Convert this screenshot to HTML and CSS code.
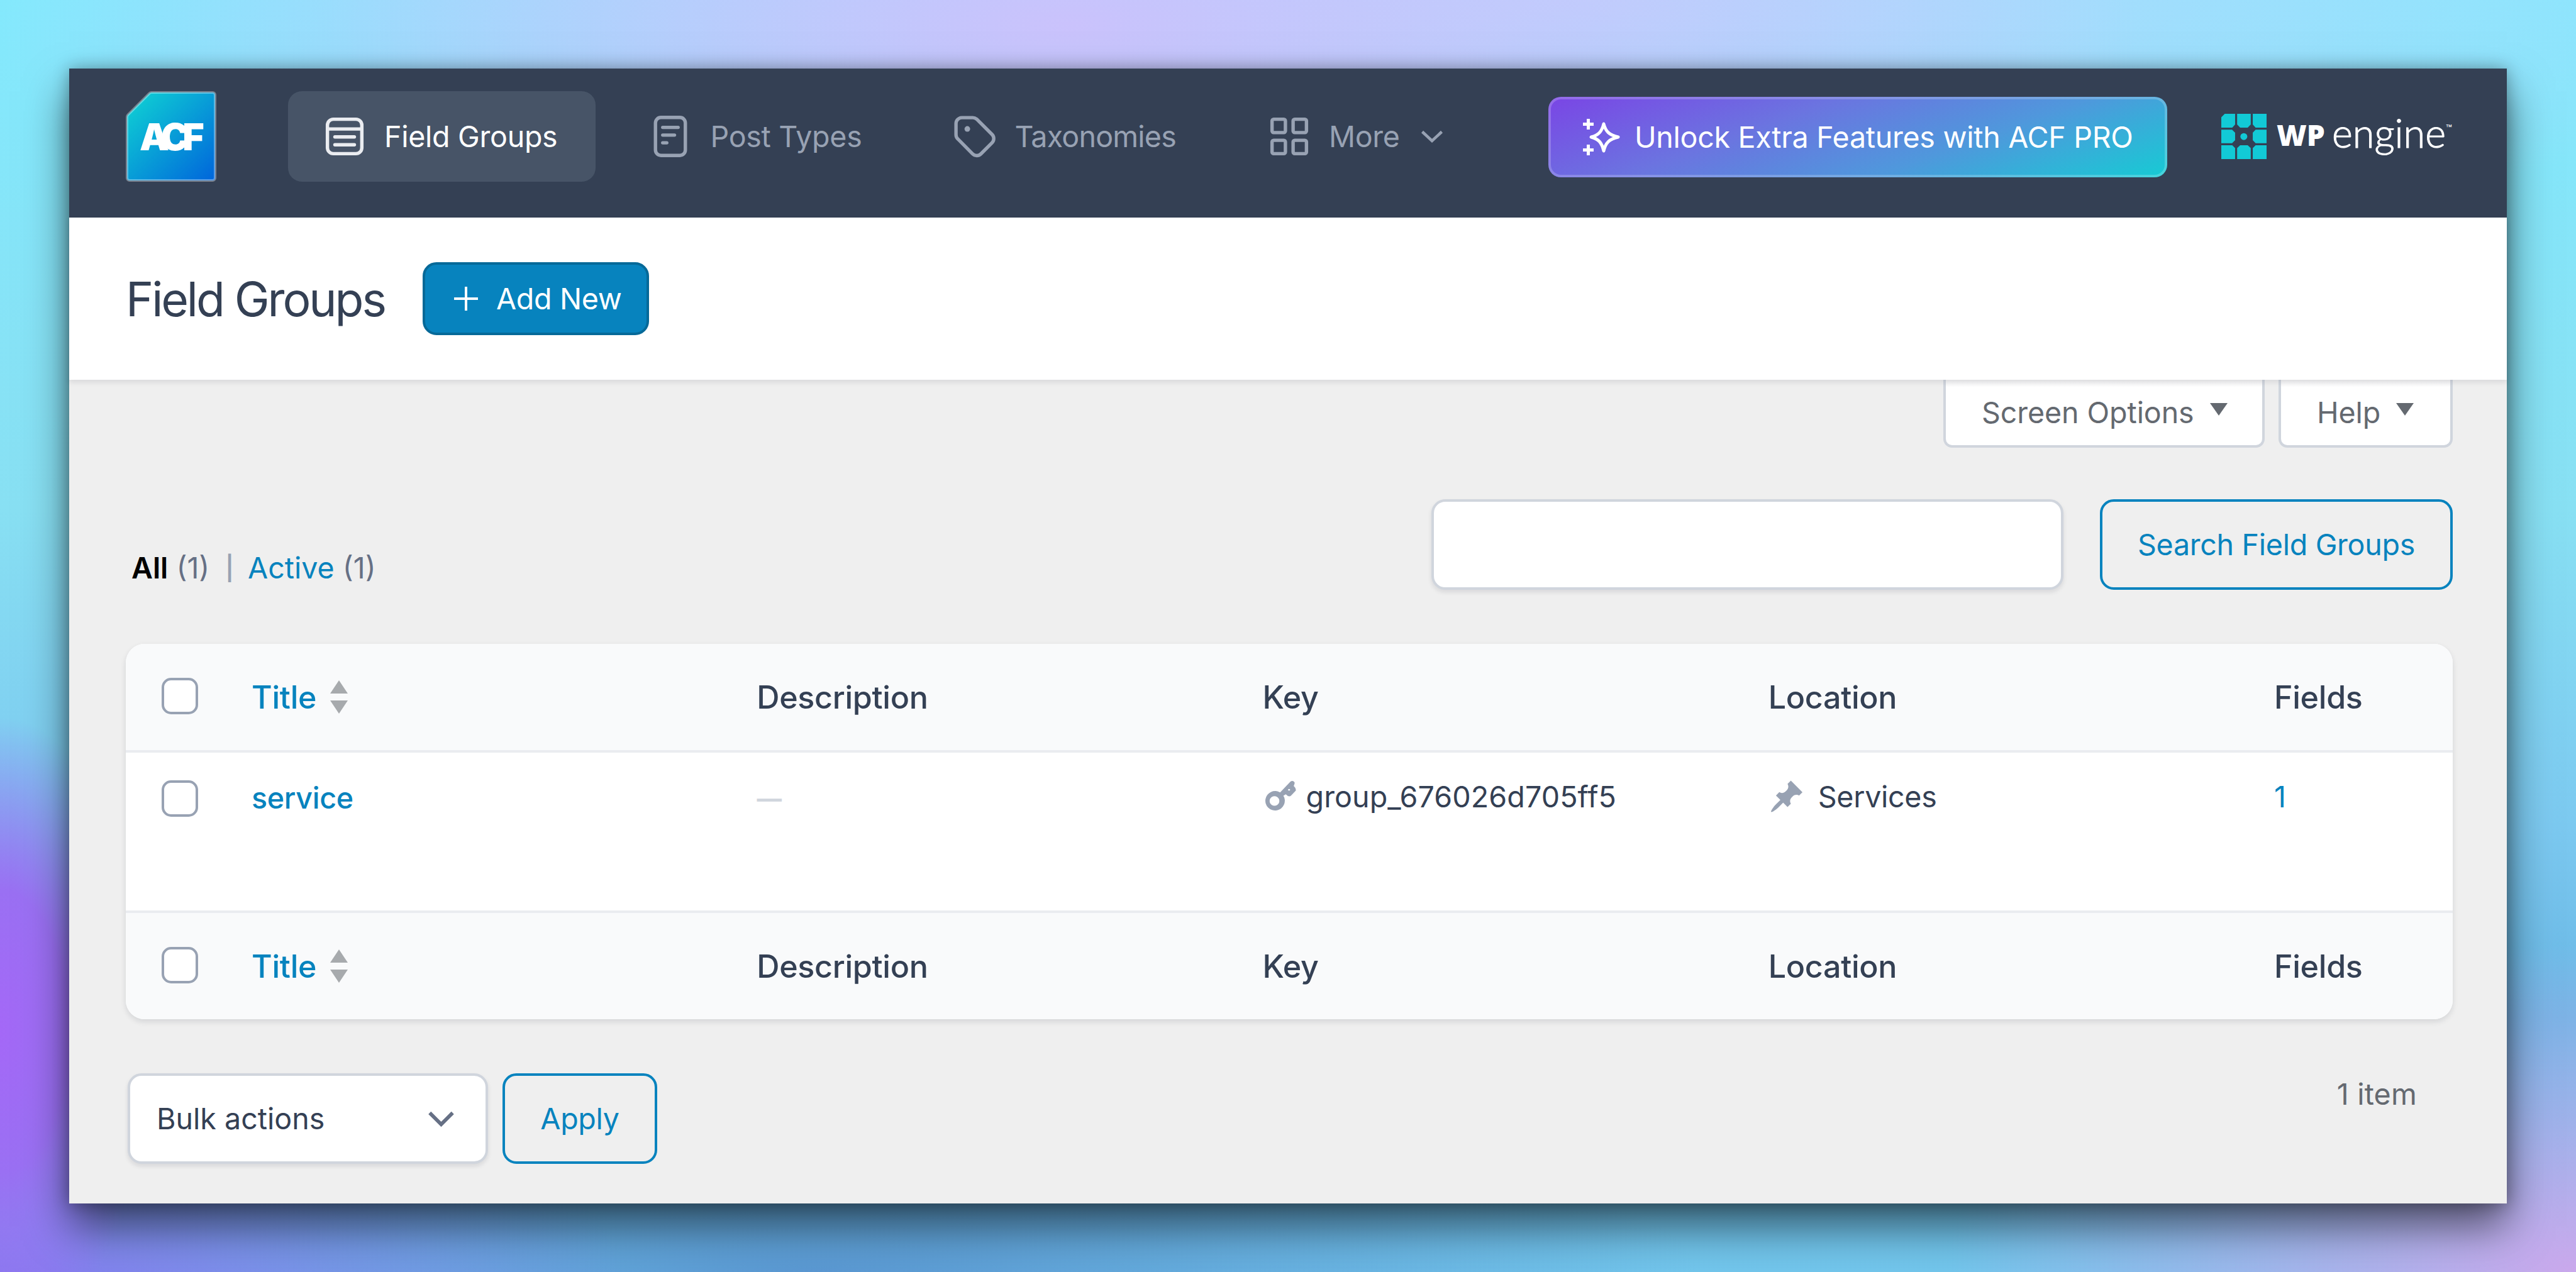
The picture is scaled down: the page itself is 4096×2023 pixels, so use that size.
FILE: index.html
```html
<!DOCTYPE html>
<html lang="en">
<head>
  <meta charset="UTF-8">
  <title>Field Groups</title>
  <link rel="stylesheet" href="styles.css">
</head>
<body>
  <div class="window">

    <nav class="navbar">
      <a class="logo" href="#">
        <svg viewBox="0 0 144 144">
          <defs>
            <linearGradient id="acf" x1="0" y1="0" x2="1" y2="1">
              <stop offset="0.1" stop-color="#0ecad4"/>
              <stop offset="1" stop-color="#0065db"/>
            </linearGradient>
          </defs>
          <path d="M41 2H138a4 4 0 0 1 4 4V138a4 4 0 0 1-4 4H6a4 4 0 0 1-4-4V41a5 5 0 0 1 1.5-3.5L37.500 3.500A5 5 0 0 1 41 2z" fill="url(#acf)" stroke="#fff" stroke-opacity=".35" stroke-width="4"/>
        </svg>
        <span class="logo-text">ACF</span>
      </a>

      <div class="tabs">
        <a class="tab active" href="#">
          <svg class="icon" viewBox="0 0 20 20"><rect x="2.400" y="2.400" width="15.200" height="15.200" rx="2.600"/><path d="M2.400 6.700h15.200M5.700 10.200h8.600M5.700 13.700h8.600"/></svg>
          <span>Field Groups</span>
        </a>
        <a class="tab" href="#">
          <svg class="icon" viewBox="0 0 20 20"><rect x="3.400" y="1.600" width="13.200" height="16.800" rx="2.400"/><path d="M6.600 6h6.800M6.600 9.400h5.200M6.600 12.800h1.800"/></svg>
          <span>Post Types</span>
        </a>
        <a class="tab taxonomies" href="#">
          <svg class="icon" viewBox="0 0 20 20"><path d="M1.700 4.300a2.600 2.600 0 0 1 2.600-2.600h4.800c.7 0 1.300.3 1.800.7l6.700 6.700a2.600 2.600 0 0 1 0 3.700l-4.900 4.900a2.600 2.600 0 0 1-3.700 0L2.400 11a2.600 2.600 0 0 1-.7-1.800z"/><circle class="dot" cx="6.700" cy="6.700" r="1.250"/></svg>
          <span>Taxonomies</span>
        </a>
        <a class="tab" href="#">
          <svg class="icon" viewBox="0 0 20 20"><rect x="2.400" y="2.400" width="5.900" height="5.900" rx=".7"/><rect x="11.700" y="2.400" width="5.900" height="5.900" rx=".7"/><rect x="2.400" y="11.700" width="5.900" height="5.900" rx=".7"/><rect x="11.700" y="11.700" width="5.900" height="5.900" rx=".7"/></svg>
          <span>More</span>
          <svg class="caret" viewBox="0 0 36 20"><path d="M2.500 2.500L18 17 33.500 2.500"/></svg>
        </a>
      </div>

      <a class="btn-pro" href="#">
        <svg viewBox="0 0 60 60"><path d="M34 9c3 12 9 18 23 21-14 3-20 9-23 22-3-13-8-19-20-22 12-3 17-9 20-21z"/><path d="M9.500 1v17M1 9.500h17M9.500 42v17M1 50.500h17"/></svg>
        <span>Unlock Extra Features with ACF PRO</span>
      </a>

      <a class="wpengine" href="#">
        <svg viewBox="0 0 223 223">
          <path d="M17 0H68V53L54 68H0V17zM78 0H145V53L130 68H93L78 53zM155 0H223V68H169L155 53zM0 78H53L68 93V130L53 145H0zM223 78H169L155 93V130L169 145H223zM0 155H54L68 169V223H0zM93 155H130L145 169V223H78V169zM169 155H223V223H155V169z"/>
          <circle cx="111" cy="112" r="17"/>
        </svg>
        <span class="wp">WP</span><span class="engine">engine</span><span class="tm">™</span>
      </a>
    </nav>

    <header class="page-header">
      <h1>Field Groups</h1>
      <a class="btn-add" href="#">
        <svg viewBox="0 0 40 40"><path d="M20 1v38M1 20h38"/></svg>
        <span>Add New</span>
      </a>
    </header>

    <main class="content">
      <div class="screen-meta">
        <button class="meta-btn options"><span>Screen Options</span><i class="down"></i></button>
        <button class="meta-btn help"><span>Help</span><i class="down"></i></button>
      </div>

      <div class="filters">
        <ul class="views">
          <li><b>All</b> <span class="count">(1)</span></li>
          <li class="sep">|</li>
          <li><a href="#">Active</a> <span class="count">(1)</span></li>
        </ul>
        <div class="search">
          <input class="search-input" type="text">
          <button class="btn search-btn"><span>Search Field Groups</span></button>
        </div>
      </div>

      <div class="table-wrap">
        <table>
          <thead>
            <tr>
              <th class="check"><span class="box"></span></th>
              <th><a class="sort" href="#"><span>Title</span><i class="arrows"></i></a></th>
              <th>Description</th>
              <th>Key</th>
              <th>Location</th>
              <th class="fields">Fields</th>
            </tr>
          </thead>
          <tbody>
            <tr>
              <td class="check"><span class="box"></span></td>
              <td><a class="row-title" href="#">service</a></td>
              <td><span class="dash">—</span></td>
              <td>
                <div class="with-icon">
                  <svg class="key" viewBox="0 0 155 152"><path d="M76 60L127 6Q139-2 147 10Q149 15 143 28Q156 40 153 51L130 75Q120 86 104 69L92 76A48 48 0 1 1 76 60zM48 78a24 24 0 1 0 .1 0zM120 43a5 4 0 1 0 .1 0z"/></svg>
                  <span class="group-key">group_676026d705ff5</span>
                </div>
              </td>
              <td>
                <div class="with-icon">
                  <svg class="pin" viewBox="0 0 20 20"><path d="M10.440 3.020l1.820-1.820 6.360 6.350-1.830 1.820c-1.050-.68-2.480-.57-3.410.36l-.75.75c-.92.93-1.040 2.350-.35 3.410l-1.830 1.820-2.410-2.410-2.800 2.790c-.42.42-3.380 2.710-3.800 2.290s1.860-3.390 2.280-3.810l2.790-2.790L4.100 9.360l1.830-1.820c1.050.69 2.480.57 3.400-.36l.75-.75c.93-.92 1.050-2.350.36-3.410z"/></svg>
                  <span>Services</span>
                </div>
              </td>
              <td class="fields"><a href="#">1</a></td>
            </tr>
          </tbody>
          <tfoot>
            <tr>
              <th class="check"><span class="box"></span></th>
              <th><a class="sort" href="#"><span>Title</span><i class="arrows"></i></a></th>
              <th>Description</th>
              <th>Key</th>
              <th>Location</th>
              <th class="fields">Fields</th>
            </tr>
          </tfoot>
        </table>
      </div>

      <div class="bottom">
        <div class="select">
          <span>Bulk actions</span>
          <svg viewBox="0 0 44 26"><path d="M3 3l19 19L41 3"/></svg>
        </div>
        <button class="btn apply"><span>Apply</span></button>
        <span class="items">1 item</span>
      </div>
    </main>

  </div>
</body>
</html>
```
FILE: styles.css
```css
* {
  box-sizing: border-box;
}

body {
  margin: 0;
  width: 4096px;
  height: 2023px;
  padding: 109px 110px;
  overflow: hidden;
  font-family: Inter, sans-serif;
  font-size: 46.6px;
  letter-spacing: -0.300px;
  color: #344054;
  background:
    radial-gradient(ellipse 1700px 560px at 1700px 40px, #cac2fc 0%, rgba(201, 195, 252, 0) 100%),
    radial-gradient(ellipse 2000px 420px at 2500px 0, #b9d4fd 0%, rgba(188, 210, 253, 0) 100%),
    radial-gradient(ellipse 240px 500px at 0 1640px, #a468f7 0%, #9a70f3 45%, rgba(140, 130, 240, 0) 100%),
    radial-gradient(ellipse 1000px 420px at 0 2060px, #8676ee 0%, rgba(110, 130, 230, 0) 100%),
    radial-gradient(ellipse 1000px 520px at 4096px 2023px, #caa8ec 0%, rgba(160, 170, 232, 0) 100%),
    radial-gradient(ellipse 1400px 260px at 1300px 2023px, #5a98d2 0%, rgba(90, 160, 216, 0) 100%),
    linear-gradient(180deg, #84e9fd 0%, #88e0f3 40%, #7cc9f0 65%, #68b6e4 80%, #72c6ec 100%);
}

a {
  color: #0783be;
  text-decoration: none;
}

button {
  font: inherit;
  letter-spacing: inherit;
  padding: 0;
}

svg {
  display: block;
  fill: none;
  stroke: currentColor;
}

.window {
  height: 1805px;
  background: #efefef;
  box-shadow: 0 36px 64px rgba(0, 0, 0, 0.55), 0 0 24px rgba(0, 0, 0, 0.3);
}

/* top bar */
.navbar {
  display: flex;
  align-items: center;
  height: 237px;
  padding: 0 86px 22px 90px;
  background: #344054;
}

.logo {
  position: relative;
  width: 144px;
  height: 144px;
}

.logo-text {
  position: absolute;
  left: 22px;
  top: 37px;
  font-size: 59px;
  font-weight: 900;
  line-height: 72px;
  letter-spacing: -10px;
  color: #fff;
}

.tabs {
  display: flex;
  gap: 29px;
  margin-left: 114px;
}

.tab {
  display: flex;
  align-items: center;
  height: 144px;
  padding: 0 61px 0 54px;
  border-radius: 22px;
  color: #98a2b3;
}

.tab.active {
  background: #475467;
  color: #fff;
}

.tab.active .icon {
  color: #eaecf0;
}

.taxonomies {
  letter-spacing: -0.800px;
}

.icon {
  width: 72px;
  height: 72px;
  margin-right: 27px;
  stroke-width: 1.500;
  stroke-linecap: round;
  stroke-linejoin: round;
}

.icon .dot {
  fill: currentColor;
  stroke: none;
}

.caret {
  width: 36px;
  height: 20px;
  margin-left: 33px;
  stroke-width: 4.500;
}

.btn-pro {
  display: flex;
  align-items: center;
  width: 984px;
  height: 128px;
  margin: 2px 0 0 auto;
  padding-left: 50px;
  border: 4px solid rgba(255, 255, 255, 0.2);
  border-radius: 20px;
  background: linear-gradient(160deg, #7a45e5 0%, #6b74e0 35%, #4f98dc 65%, #16cbd4 100%) border-box;
  color: #fff;
}

.btn-pro svg {
  width: 60px;
  height: 60px;
  margin-right: 23px;
  stroke-width: 5;
  stroke-linejoin: round;
}

.wpengine {
  display: flex;
  align-items: center;
  width: 368px;
  margin-left: 86px;
  color: #fff;
  letter-spacing: 0;
  white-space: nowrap;
}

.wpengine svg {
  width: 72px;
  height: 72px;
  margin-right: 16px;
  fill: #12cad6;
  stroke: none;
}

.wp {
  margin-top: -5px;
  font-family: "Open Sans", sans-serif;
  font-size: 46px;
  font-weight: 800;
  line-height: 60px;
}

.engine {
  margin: -12px 0 0 11px;
  font-family: Lato, sans-serif;
  font-size: 63px;
  font-weight: 300;
  line-height: 60px;
  -webkit-text-stroke: 1px #fff;
}

.tm {
  font-size: 16px;
  margin-top: -26px;
}

/* page title */
.page-header {
  position: relative;
  display: flex;
  align-items: center;
  height: 258px;
  padding-left: 90px;
  background: #fff;
  box-shadow: 0 4px 8px rgba(16, 24, 40, 0.1);
}

h1 {
  margin: 0;
  font-size: 75px;
  font-weight: 400;
  letter-spacing: -3.100px;
}

.btn-add {
  display: flex;
  align-items: center;
  width: 360px;
  height: 116px;
  margin-left: 60px;
  padding-left: 45px;
  border: 4px solid #066998;
  border-radius: 22px;
  background: #0783be;
  color: #fff;
}

.btn-add svg {
  width: 40px;
  height: 40px;
  margin-right: 28px;
  stroke-width: 4;
}

.content {
  padding: 0 86px 0 90px;
}

.screen-meta {
  display: flex;
  justify-content: flex-end;
  gap: 22px;
}

.meta-btn {
  display: flex;
  align-items: center;
  height: 108px;
  padding: 0 0 0 57px;
  border: 4px solid #d0d5dd;
  border-top: none;
  border-radius: 0 0 14px 14px;
  background: linear-gradient(#f1f1f2, #fff 12px);
  color: #646970;
  letter-spacing: -0.100px;
}

.options {
  width: 511px;
}

.help {
  width: 277px;
}

.down {
  margin: -10px 0 0 25px;
  border: 14px solid transparent;
  border-top: 20px solid #646970;
  border-bottom: none;
}

/* views and search */
.filters {
  display: flex;
  justify-content: space-between;
  align-items: flex-end;
  margin-top: 82px;
}

.views {
  display: flex;
  margin: 0;
  padding: 0 0 0 9px;
  list-style: none;
  line-height: 70px;
  letter-spacing: 0;
}

.views b {
  font-weight: 600;
  color: #000;
}

.count {
  color: #667085;
}

.sep {
  margin: 0 22px 0 25px;
  font-size: 38px;
  font-weight: 600;
  color: #98a2b3;
}

.search {
  display: flex;
  gap: 58px;
}

.search-input {
  width: 1005px;
  height: 144px;
  border: 4px solid #d0d5dd;
  border-radius: 22px;
  background: #fff;
  box-shadow: 0 4px 7px rgba(16, 24, 40, 0.1);
}

.btn {
  height: 144px;
  border: 4px solid #0783be;
  border-radius: 22px;
  background: none;
  color: #0783be;
}

.search-btn {
  width: 561px;
}

/* list table */
.table-wrap {
  margin-top: 86px;
  border-radius: 30px;
  overflow: hidden;
  background: #fff;
  box-shadow: 0 4px 10px rgba(16, 24, 40, 0.12);
}

table {
  width: 100%;
  table-layout: fixed;
  border-spacing: 0;
}

th {
  height: 173px;
  padding: 0;
  text-align: left;
  font-size: 50.200px;
  font-weight: 540;
  background: #f9fafb;
}

thead th {
  border-bottom: 4px solid #eaecf0;
}

tfoot th {
  border-top: 4px solid #eaecf0;
}

td {
  height: 251px;
  padding: 34px 0 0;
  line-height: 72px;
  vertical-align: top;
}

.check {
  width: 199px;
  padding-left: 57px;
}

.fields {
  width: 284px;
}

.box {
  display: block;
  width: 58px;
  height: 58px;
  border: 4px solid #98a2b3;
  border-radius: 15px;
  background: #fff;
}

th .box {
  margin-top: -4px;
}

td .box {
  margin-top: 10px;
}

.sort {
  display: flex;
  align-items: center;
  padding-left: 1px;
}

.arrows {
  display: flex;
  flex-direction: column;
  gap: 11px;
  margin-left: 22px;
}

.arrows::before,
.arrows::after {
  content: "";
  border: 14.500px solid transparent;
}

.arrows::before {
  border-top: none;
  border-bottom: 21px solid #a7aaad;
}

.arrows::after {
  border-bottom: none;
  border-top: 21px solid #a7aaad;
}

.row-title {
  display: block;
  padding: 2px 0 0 1px;
  font-weight: 540;
}

.dash {
  padding-left: 1px;
  font-size: 38px;
  color: #d0d5dd;
  -webkit-text-stroke: 1.500px #d0d5dd;
}

.with-icon {
  display: flex;
  align-items: center;
}

.with-icon svg {
  fill: #98a2b3;
  stroke: none;
}

.key {
  width: 50px;
  height: 49px;
  margin: -4px 16px 0 3px;
}

.group-key {
  letter-spacing: 0.100px;
}

.pin {
  width: 58px;
  height: 58px;
  margin-right: 21px;
}

/* bulk actions */
.bottom {
  display: flex;
  align-items: flex-start;
  margin-top: 86px;
  padding-left: 3px;
}

.select {
  display: flex;
  justify-content: space-between;
  align-items: center;
  width: 573px;
  height: 144px;
  padding: 0 49px 0 42px;
  border: 4px solid #d0d5dd;
  border-radius: 22px;
  background: #fff;
  box-shadow: 0 4px 7px rgba(16, 24, 40, 0.1);
  letter-spacing: 0;
}

.select svg {
  width: 43px;
  height: 25px;
  color: #667085;
  stroke-width: 6;
}

.apply {
  width: 246px;
  margin-left: 23px;
}

.items {
  margin-top: -2px;
  margin-left: auto;
  margin-right: 57px;
  line-height: 70px;
  letter-spacing: 0.200px;
  color: #646970;
}
```
